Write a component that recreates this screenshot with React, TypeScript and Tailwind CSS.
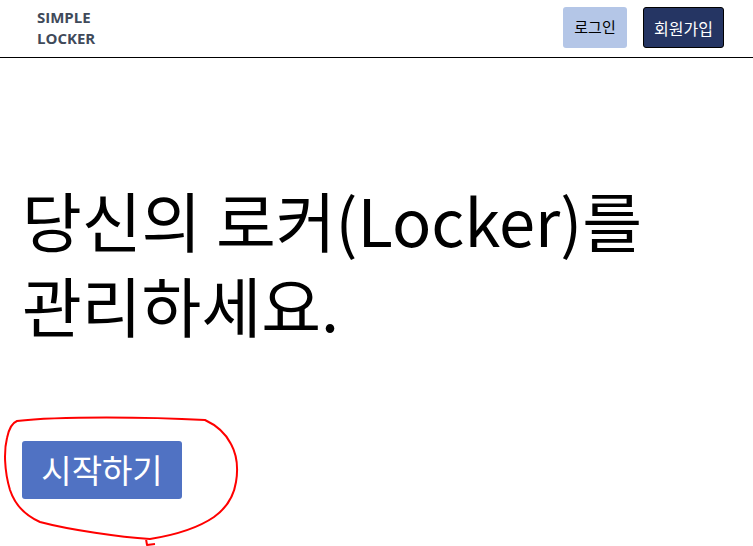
import React from "react";

const kr = { fontFamily: '"Noto Sans CJK KR", "Noto Sans", sans-serif' };

function Header() {
  return (
    <header className="flex h-[58px] items-start justify-between border-b border-black pl-[37px] pr-[29px]">
      <div
        className="pt-[7px] text-[15px] font-bold leading-[21px] text-[#3f4a5a]"
        style={{ fontFamily: '"Open Sans", sans-serif' }}
      >
        SIMPLE
        <br />
        LOCKER
      </div>
      <div className="flex items-start gap-[16px] pt-[7px]" style={kr}>
        <button className="h-[41px] w-[64px] rounded-[3px] bg-[#b4c6e7] text-[15px] text-black">
          로그인
        </button>
        <button className="h-[41px] w-[81px] rounded-[3px] border border-black bg-[#253563] text-[16px] text-white">
          회원가입
        </button>
      </div>
    </header>
  );
}

function Scribble() {
  return (
    <svg
      className="pointer-events-none absolute left-0 top-0"
      width={753}
      height={546}
      viewBox="0 0 753 546"
    >
      <path
        d="M17 421 C 60 416, 150 417, 205 420 C 218 426, 226 434, 231 444 C 237 455, 238 470, 236 482 C 234 495, 228 507, 214 517 C 198 528, 175 535, 150 539 C 120 537, 70 530, 40 522 C 22 514, 14 502, 10 490 C 4 470, 4 450, 7 438 C 9 428, 12 423, 17 421 Z M146 539 L147 545 L155 544"
        fill="none"
        stroke="#ff0000"
        strokeWidth={2}
        strokeLinejoin="round"
      />
    </svg>
  );
}

export default function App() {
  return (
    <div className="relative h-[546px] w-[753px] overflow-hidden bg-white">
      <Header />
      <main className="pl-[22px]" style={kr}>
        <h1 className="mt-[119px] whitespace-nowrap text-[65px] font-normal leading-[85px] text-black">
          당신의 로커(Locker)를
          <br />
          관리하세요.
        </h1>
        <button className="mt-[94px] h-[58px] w-[160px] rounded-[3px] bg-[#5072c3] text-[33px] text-white">
          시작하기
        </button>
      </main>
      <Scribble />
    </div>
  );
}
